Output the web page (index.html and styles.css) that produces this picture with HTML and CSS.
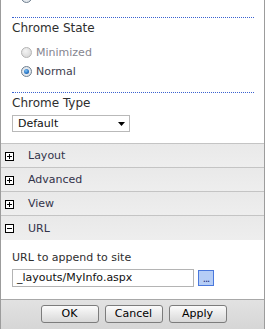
FILE: index.html
```html
<!DOCTYPE html>
<html>
<head>
<meta charset="utf-8">
<link rel="stylesheet" href="styles.css">
</head>
<body>
<div class="panel">
  <div class="props">
    <div class="opt opt-cut"><span class="radio on"></span></div>
    <div class="sep"></div>
    <div class="label">Chrome State</div>
    <div class="opt first"><span class="radio off"></span><span class="opt-text dim">Minimized</span></div>
    <div class="opt"><span class="radio on"></span><span class="opt-text">Normal</span></div>
    <div class="sep sep2"></div>
    <div class="label">Chrome Type</div>
    <div class="select"><span>Default</span><svg class="arrow" width="7" height="4" viewBox="0 0 7 4"><path d="M0 0H7L3.5 4Z" fill="#000"/></svg></div>
  </div>
  <div class="cats">
    <div class="cat"><span class="tog"><svg width="9" height="9" viewBox="0 0 9 9"><rect x="0.5" y="0.5" width="8" height="8" fill="#fff" stroke="#000"/><path d="M2 4.5H7M4.5 2V7" stroke="#000"/></svg></span>Layout</div>
    <div class="cat"><span class="tog"><svg width="9" height="9" viewBox="0 0 9 9"><rect x="0.5" y="0.5" width="8" height="8" fill="#fff" stroke="#000"/><path d="M2 4.5H7M4.5 2V7" stroke="#000"/></svg></span>Advanced</div>
    <div class="cat"><span class="tog"><svg width="9" height="9" viewBox="0 0 9 9"><rect x="0.5" y="0.5" width="8" height="8" fill="#fff" stroke="#000"/><path d="M2 4.5H7M4.5 2V7" stroke="#000"/></svg></span>View</div>
    <div class="cat open"><span class="tog"><svg width="9" height="9" viewBox="0 0 9 9"><rect x="0.5" y="0.5" width="8" height="8" fill="#fff" stroke="#000"/><path d="M2 4.5H7" stroke="#000"/></svg></span>URL</div>
  </div>
  <div class="catbody">
    <div class="label small">URL to append to site</div>
    <div class="urlrow">
      <div class="input">_layouts/MyInfo.aspx</div>
      <div class="browse">...</div>
    </div>
  </div>
  <div class="bar">
    <button class="btn">OK</button>
    <button class="btn">Cancel</button>
    <button class="btn">Apply</button>
  </div>
</div>
</body>
</html>
```
FILE: styles.css
```css
html, body {
  margin: 0;
  padding: 0;
  background: #fff;
  overflow: hidden;
}
body {
  font-family: "DejaVu Sans", Verdana, sans-serif;
  font-size: 11px;
  color: #333;
}
.panel {
  width: 263px;
  height: 329px;
  border-left: 1px solid #9c9c9c;
  border-right: 1px solid #9c9c9c;
  display: flex;
  flex-direction: column;
  overflow: hidden;
}
.props {
  padding-left: 11px;
  padding-right: 10px;
}
.opt {
  height: 19px;
  line-height: 19px;
  display: flex;
  align-items: center;
  padding-left: 9px;
  white-space: nowrap;
}
.opt-cut {
  margin-top: -12px;
}
.opt-cut + .sep {
  margin-top: 10px;
}
.opt.first {
  margin-top: 7px;
}
.opt-text {
  margin-left: 4px;
  color: #3e3e4e;
}
.opt-text.dim {
  color: #85858f;
}
.radio {
  width: 11px;
  height: 11px;
  border-radius: 50%;
  box-sizing: border-box;
  flex: none;
  position: relative;
}
.radio.off {
  border: 1px solid #b4b4b4;
  background: radial-gradient(circle at 40% 35%, #f4f4f4 0%, #dcdcdc 70%, #cfcfcf 100%);
}
.radio.on {
  border: 1px solid #6f7f8f;
  background: radial-gradient(circle at 50% 50%, #eef2f6 0%, #d9dfe6 100%);
}
.radio.on::after {
  content: "";
  position: absolute;
  left: 2px;
  top: 2px;
  width: 5px;
  height: 5px;
  border-radius: 50%;
  background: radial-gradient(circle at 40% 35%, #7ec2f4 0%, #2a78c8 55%, #134a8a 100%);
}
.sep {
  margin-top: 9px;
  border-top: 1px dotted #3a62d0;
}
.sep2 {
  margin-top: 11px;
}
.label {
  margin-top: 3px;
  font-size: 12px;
  line-height: 15px;
  color: #2e2e2e;
}
.label.small {
  font-size: 11px;
  line-height: 14px;
  margin-top: 0;
}
.select {
  margin-top: 4px;
  width: 118px;
  height: 17px;
  box-sizing: border-box;
  border: 1px solid #b9b9b9;
  display: flex;
  align-items: center;
  justify-content: space-between;
  padding-left: 5px;
  padding-right: 4px;
  font-size: 11px;
  color: #111;
}
.cats {
  margin-top: 11px;
}
.cat {
  height: 23px;
  border-top: 1px solid #c4c4c4;
  background: linear-gradient(#e9e9e9, #eeeeee);
  display: flex;
  align-items: center;
  padding-left: 4px;
  color: #33334a;
}
.cat.open {
  height: 24px;
}
.tog {
  width: 9px;
  height: 9px;
  display: flex;
  margin-right: 14px;
  margin-top: 1px;
}
.catbody {
  padding: 11px 10px 12px 11px;
}
.urlrow {
  margin-top: 4px;
  display: flex;
  align-items: center;
}
.input {
  width: 182px;
  height: 18px;
  box-sizing: border-box;
  border: 1px solid #b4b4b4;
  padding-left: 4px;
  line-height: 16px;
  color: #111;
  white-space: nowrap;
  overflow: hidden;
}
.browse {
  margin-left: 4px;
  width: 16px;
  height: 16px;
  box-sizing: border-box;
  border: 1px solid #4a78dc;
  background: #b5cdf6;
  color: #1a2a80;
  font-size: 10px;
  line-height: 16px;
  text-align: center;
  letter-spacing: -1px;
}
.bar {
  flex: 1;
  border-top: 1px solid #a8a8a8;
  background: linear-gradient(#e2e2e2, #d6d6d6);
  display: flex;
  justify-content: center;
  align-items: flex-start;
  gap: 6px;
  padding-top: 5px;
  padding-left: 2px;
}
.btn {
  width: 58px;
  height: 18px;
  box-sizing: border-box;
  border: 1px solid #7c7c7c;
  border-radius: 3px;
  background: linear-gradient(#fbfbfb, #e6e6e6 60%, #d8d8d8);
  font-family: "DejaVu Sans", Verdana, sans-serif;
  font-size: 11px;
  color: #000;
  padding: 0;
  line-height: 16px;
}
```
